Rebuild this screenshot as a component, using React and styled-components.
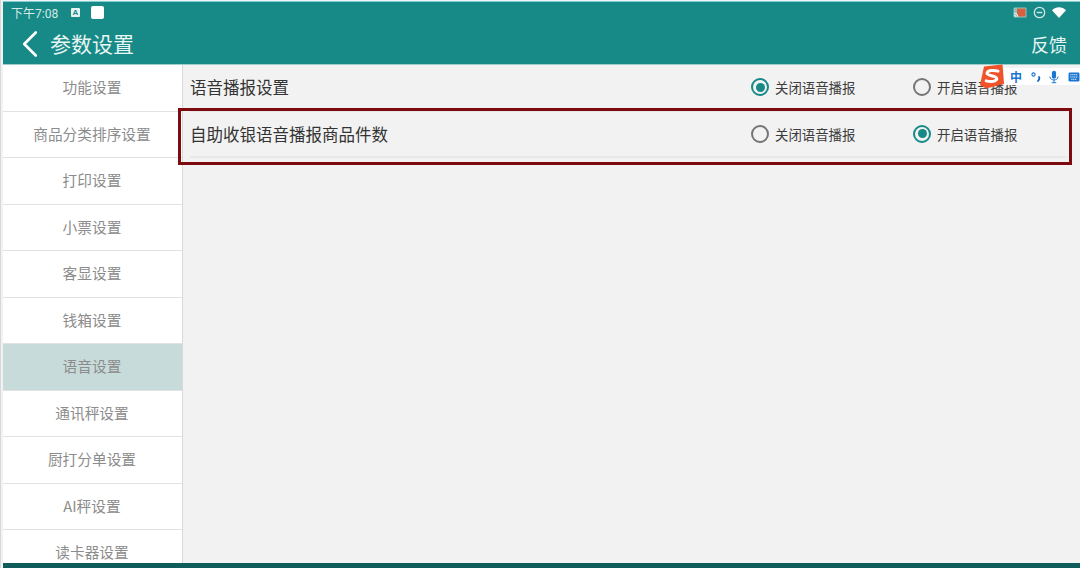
import React from "react";
import styled, { createGlobalStyle } from "styled-components";
import { ChevronLeft } from "lucide-react";

const GlobalStyle = createGlobalStyle`
  html, body {
    margin: 0;
    padding: 0;
    height: 568px;
    overflow: hidden;
    background: #f2f2f2;
  }
  * {
    box-sizing: border-box;
  }
`;

const menuItems = [
  "功能设置",
  "商品分类排序设置",
  "打印设置",
  "小票设置",
  "客显设置",
  "钱箱设置",
  "语音设置",
  "通讯秤设置",
  "厨打分单设置",
  "AI秤设置",
  "读卡器设置",
];

const settings = [
  { title: "语音播报设置", checked: 0 },
  { title: "自助收银语音播报商品件数", checked: 1 },
];

function Radio({ on, children }) {
  return (
    <RadioItem>
      <RadioCircle $on={on} />
      {children}
    </RadioItem>
  );
}

export default function App() {
  return (
    <Page>
      <GlobalStyle />
      <Header>
        <StatusBar>
          <Clock>下午7:08</Clock>
          <NoteIcon>A</NoteIcon>
          <WhiteSquare />
          <StatusRight>
            <svg width="14" height="11" viewBox="0 0 14 11">
              <rect x="0.5" y="0.5" width="13" height="10" rx="1" fill="#8fc4bd" />
              <rect x="4" y="1.500" width="8.500" height="8" fill="#d9603f" />
              <path d="M1 6a4 4 0 0 1 4 4M1 8a2 2 0 0 1 2 2" stroke="#e8f3f1" fill="none" />
            </svg>
            <svg width="13" height="13" viewBox="0 0 13 13">
              <circle cx="6.5" cy="6.5" r="5.2" fill="none" stroke="#cfe5e2" strokeWidth="1.3" />
              <path d="M3.7 6.5h5.6" stroke="#cfe5e2" strokeWidth="1.4" />
            </svg>
            <svg width="14" height="11" viewBox="0 0 14 11">
              <path d="M0 3.2C3.8-.9 10.200-.9 14 3.200L7 11z" fill="#fff" />
            </svg>
          </StatusRight>
        </StatusBar>
        <TitleBar>
          <BackIcon size={46} strokeWidth={1.4} />
          <Title>参数设置</Title>
          <Feedback>反馈</Feedback>
        </TitleBar>
      </Header>
      <Body>
        <Sidebar>
          {menuItems.map((item) => (
            <MenuItem key={item} $active={item === "语音设置"}>
              {item}
            </MenuItem>
          ))}
        </Sidebar>
        <Content>
          {settings.map((row) => (
            <SettingRow key={row.title}>
              <RowTitle>{row.title}</RowTitle>
              <Options>
                <Radio on={row.checked === 0}>关闭语音播报</Radio>
                <Radio on={row.checked === 1}>开启语音播报</Radio>
              </Options>
            </SettingRow>
          ))}
        </Content>
      </Body>
      <BottomBar />
      <Highlight />
      <ImeBar>
        <ImeLogo>
          <svg width="26" height="25" viewBox="0 0 26 25">
            <path d="M5 2.500 23.500 0.500 25 20 7 24.500 1 21z" fill="#f0522a" />
            <path
              d="M19 7.200C15 5.800 8.500 6.300 8 9.300c-.4 2.800 10 2 9.800 5.400-.2 2.800-6 3.600-10.600 2.200"
              fill="none"
              stroke="#fff"
              strokeWidth="3"
              strokeLinecap="round"
            />
          </svg>
        </ImeLogo>
        <ImeText>中</ImeText>
        <ImeDots>
          <svg width="10" height="12" viewBox="0 0 10 12">
            <circle cx="2.500" cy="3.500" r="1.600" fill="none" stroke="#1976d2" strokeWidth="1.100" />
            <path d="M8 6c.8 1.200 0 2.800-1 4" fill="none" stroke="#1565c0" strokeWidth="1.800" strokeLinecap="round" />
          </svg>
        </ImeDots>
        <svg width="10" height="14" viewBox="0 0 11 14">
          <rect x="3.200" y="0" width="4.600" height="9" rx="2.300" fill="#1976d2" />
          <path d="M1 6.500c0 5 9 5 9 0M5.500 10v3M3 13.300h5" fill="none" stroke="#1976d2" strokeWidth="1.100" />
        </svg>
        <svg width="12" height="10" viewBox="0 0 13 11">
          <rect x="0.500" y="0.500" width="12" height="10" rx="1.500" fill="#1976d2" />
          <path d="M2.500 3h8M2.500 5.500h8M3.500 8h6" stroke="#fff" strokeWidth="1.100" strokeDasharray="1.300 .8" />
        </svg>
      </ImeBar>
    </Page>
  );
}

const Page = styled.div`
  position: relative;
  display: flex;
  flex-direction: column;
  width: 1080px;
  height: 568px;
  padding-left: 2px;
  padding-top: 1px;
  overflow: hidden;
  background: #f2f2f2;
  font-family: "Noto Sans CJK SC", "Liberation Sans", sans-serif;
  border-left: 1px solid #d8d8d8;
`;

const Header = styled.header`
  flex: 0 0 64px;
  background: #178a87;
  border-top: 1px solid #7fd0d6;
  border-bottom: 1px solid #9fcfcb;
  color: #fff;
`;

const StatusBar = styled.div`
  display: flex;
  align-items: center;
  height: 21px;
  padding: 0 14px 0 8px;
`;

const Clock = styled.span`
  width: 60px;
  font-family: "Roboto", "Noto Sans CJK SC", sans-serif;
  font-size: 12px;
  color: #d5e9e6;
`;

const NoteIcon = styled.span`
  display: flex;
  align-items: center;
  justify-content: center;
  width: 9px;
  height: 9px;
  border-radius: 1px;
  background: #e8f3f1;
  color: #178a87;
  font-family: "Liberation Sans", sans-serif;
  font-size: 8px;
  font-weight: 700;
`;

const WhiteSquare = styled.span`
  width: 13px;
  height: 13px;
  margin-left: 11px;
  border-radius: 2px;
  background: #fff;
`;

const StatusRight = styled.div`
  display: flex;
  align-items: center;
  gap: 6px;
  margin-left: auto;
`;

const TitleBar = styled.div`
  display: flex;
  align-items: center;
  height: 40px;
  padding: 0 13px 0 0;
`;

const BackIcon = styled(ChevronLeft)`
  flex: none;
  margin: 2px 0 0 4px;
  color: #fff;
`;

const Title = styled.h1`
  margin: 0 0 0 -3px;
  font-size: 21px;
  font-weight: 400;
  color: #e9f5f3;
`;

const Feedback = styled.span`
  margin: 2px 0 0 auto;
  font-size: 18px;
  color: #e9f5f3;
`;

const Body = styled.main`
  display: flex;
  flex: 1;
  min-height: 0;
`;

const Sidebar = styled.nav`
  flex: 0 0 180px;
  overflow: hidden;
  background: #fff;
  border-right: 1px solid #d9d9d9;
`;

const MenuItem = styled.div`
  display: flex;
  align-items: center;
  justify-content: center;
  height: 46.500px;
  padding: 0 1px 2px 0;
  font-size: 14.700px;
  color: #8c8c8c;
  background: ${(p) => (p.$active ? "#c7dcda" : "#fff")};
  border-bottom: 1px solid #e2e2e2;
`;

const Content = styled.section`
  flex: 1;
  padding: 0 13px 0 7px;
`;

const SettingRow = styled.div`
  display: flex;
  align-items: center;
  justify-content: space-between;
  height: 46.500px;
  border-bottom: 2px solid #e8e8e8;
`;

const RowTitle = styled.span`
  font-size: 16.500px;
  color: #333;
`;

const Options = styled.div`
  display: flex;
  gap: 58px;
  padding-right: 50px;
`;

const RadioItem = styled.label`
  display: flex;
  align-items: center;
  gap: 6px;
  width: 104px;
  font-size: 13.400px;
  color: #3c3c3c;
  white-space: nowrap;
`;

const RadioCircle = styled.span`
  position: relative;
  flex: 0 0 18px;
  height: 18px;
  border-radius: 50%;
  border: 2px solid ${(p) => (p.$on ? "#178a87" : "#757575")};

  &::after {
    content: "";
    display: ${(p) => (p.$on ? "block" : "none")};
    position: absolute;
    inset: 2.500px;
    border-radius: 50%;
    background: #178a87;
  }
`;

const BottomBar = styled.div`
  flex: 0 0 5px;
  background: #0f5c5a;
`;

const Highlight = styled.div`
  position: absolute;
  left: 177px;
  top: 108px;
  width: 894px;
  height: 57px;
  border: 3px solid #7d0a0e;
  pointer-events: none;
`;

const ImeBar = styled.div`
  position: absolute;
  left: 1003px;
  top: 68px;
  display: flex;
  align-items: center;
  gap: 8.500px;
  width: 76px;
  height: 17px;
  padding-left: 6px;
  background: #fff;
`;

const ImeLogo = styled.div`
  position: absolute;
  left: -25px;
  top: -4px;
  line-height: 0;
`;

const ImeText = styled.span`
  font-size: 12px;
  font-weight: 700;
  color: #1976d2;
`;

const ImeDots = styled.span`
  line-height: 0;
`;
